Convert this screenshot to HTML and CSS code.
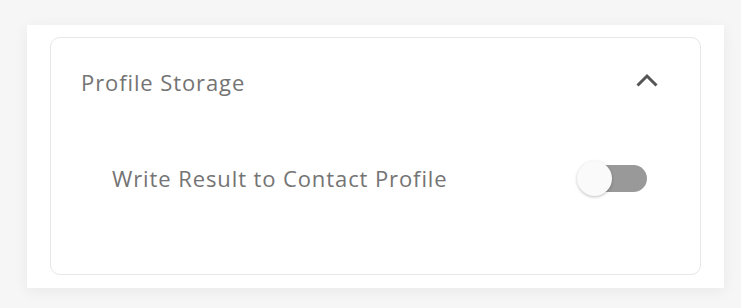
FILE: index.html
```html
<!DOCTYPE html>
<html>
<head>
<meta charset="utf-8">
<link rel="stylesheet" href="styles.css">
</head>
<body>
<div class="panel">
  <div class="card">
    <div class="card-header">
      <span class="card-title">Profile Storage</span>
      <svg class="chevron" width="24" height="16" viewBox="0 0 24 16" aria-hidden="true">
        <polyline points="2.5,13.5 12,4 21.5,13.5" fill="none" stroke="#555" stroke-width="3" stroke-linecap="butt" stroke-linejoin="miter"/>
      </svg>
    </div>
    <div class="setting-row">
      <span class="setting-label">Write Result to Contact Profile</span>
      <span class="toggle"><span class="toggle-track"></span><span class="toggle-knob"></span></span>
    </div>
  </div>
</div>
</body>
</html>
```

FILE: styles.css
```css
html, body {
  margin: 0;
  padding: 0;
}
body {
  background: #f6f6f6;
  width: 741px;
  height: 308px;
  overflow: hidden;
  font-family: "Open Sans", "Lato", sans-serif;
}
.panel {
  box-sizing: border-box;
  margin: 25px 0 0 27px;
  width: 697px;
  height: 263px;
  background: #fff;
  box-shadow: 0 3px 14px rgba(0, 0, 0, 0.06);
  padding: 12px 23px 13px 23px;
}
.card {
  box-sizing: border-box;
  height: 238px;
  border: 1px solid #e7e7e7;
  border-radius: 10px;
}
.card-header {
  height: 87px;
  display: flex;
  align-items: center;
  justify-content: space-between;
  padding: 0 41px 0 30px;
}
.card-title {
  font-size: 22px;
  line-height: 30px;
  color: #747474;
  letter-spacing: 0.9px;
}
.chevron {
  display: block;
  margin-top: -3px;
}
.setting-row {
  margin-top: 34px;
  height: 40px;
  display: flex;
  align-items: center;
  justify-content: space-between;
  padding: 0 53px 0 61px;
}
.setting-label {
  font-size: 22px;
  line-height: 30px;
  color: #747474;
  letter-spacing: 0.9px;
  margin-top: -2px;
}
.toggle {
  position: relative;
  width: 70px;
  height: 40px;
  display: block;
}
.toggle-track {
  position: absolute;
  right: 0;
  top: 6px;
  width: 62px;
  height: 27px;
  border-radius: 14px;
  background: #999;
}
.toggle-knob {
  position: absolute;
  left: 0;
  top: 2px;
  width: 35px;
  height: 35px;
  border-radius: 50%;
  background: #fafafa;
  box-shadow: 0 1px 3px rgba(0, 0, 0, 0.25);
}
```
